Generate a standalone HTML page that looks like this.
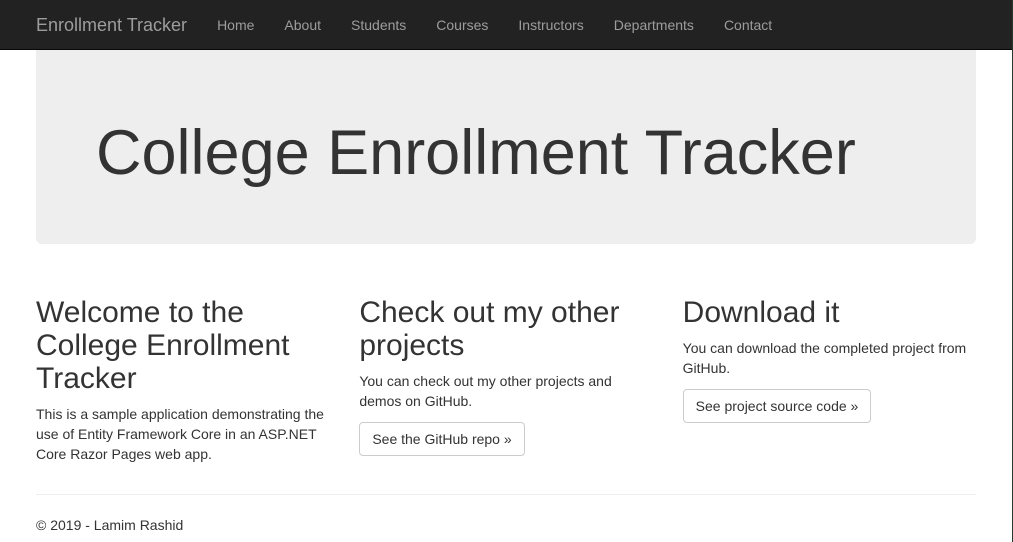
<!DOCTYPE html>
<html><head><meta charset="utf-8"><style>
*{box-sizing:border-box}
html,body{margin:0;padding:0}
body{width:1013px;height:542px;overflow:hidden;font-family:"Liberation Sans",Arial,sans-serif;font-size:14px;line-height:1.42857;color:#333;background:#fff;position:relative}
.strip{position:absolute;right:0;top:0;width:1px;height:542px;background:#2a3a2a}
.nav{height:50px;background:#222;border-bottom:1px solid #080808;width:1012px}
.nav .in{width:970px;margin-left:21px;padding:0 15px;display:flex}
.brand{font-size:18px;line-height:20px;padding:15px 15px 15px 0;color:#9d9d9d;margin-right:0}
.nav a{color:#9d9d9d;padding:15px;line-height:20px;font-size:14px;text-decoration:none}
.container{width:970px;margin-left:21px;padding:0 15px}
.jumbo{background:#eee;border-radius:0 0 6px 6px;padding:48px 60px;height:194px;margin-bottom:32px}
.jumbo h1{font-size:63px;font-weight:500;line-height:1.1;margin:21px 0 0}
.row{display:flex;margin:0 -15px}
.col{width:323.33px;padding:0 15px}
h2{font-size:30px;font-weight:500;line-height:1.1;margin:20px 0 10px}
p{margin:0 0 10px}
.btn{display:inline-block;border:1px solid #ccc;border-radius:4px;padding:6px 12px;line-height:20px;color:#333;background:#fff}
hr{border:0;border-top:1px solid #eee;margin:20px 0;}
footer p{margin:0}
</style></head><body>
<div class="nav"><div class="in"><span class="brand">Enrollment Tracker</span><a>Home</a><a>About</a><a>Students</a><a>Courses</a><a>Instructors</a><a>Departments</a><a>Contact</a></div></div>
<div class="container">
<div class="jumbo"><h1>College Enrollment Tracker</h1></div>
<div class="row">
<div class="col"><h2>Welcome to the College Enrollment Tracker</h2><p>This is a sample application demonstrating the use of Entity Framework Core in an ASP.NET Core Razor Pages web app.</p></div>
<div class="col"><h2>Check out my other projects</h2><p>You can check out my other projects and demos on GitHub.</p><span class="btn">See the GitHub repo »</span></div>
<div class="col"><h2>Download it</h2><p>You can download the completed project from GitHub.</p><span class="btn">See project source code »</span></div>
</div>
<hr style="position:absolute;top:474px;left:36px;width:940px">
<footer style="position:absolute;top:516px;left:36px"><p>© 2019 - Lamim Rashid</p></footer>
</div>
<div class="strip"></div>
</body></html>
